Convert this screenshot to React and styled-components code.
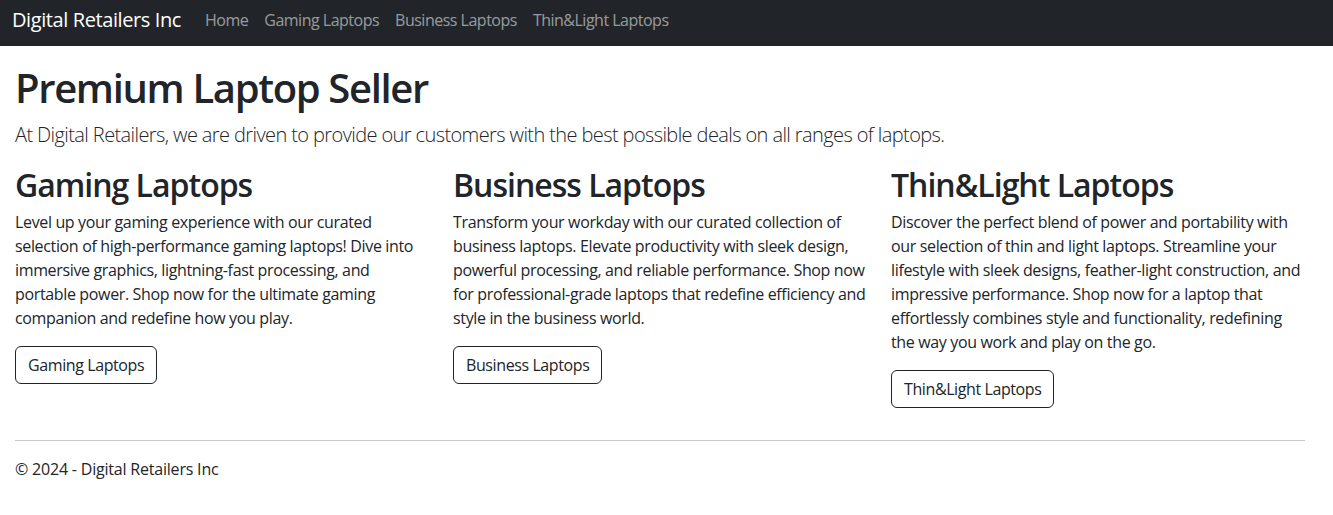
import React from "react";
import styled, { createGlobalStyle } from "styled-components";

const Global = createGlobalStyle`
  * { box-sizing: border-box; }
  body {
    margin: 0;
    font-family: "Open Sans", "Noto Sans", "Liberation Sans", sans-serif;
    font-size: 16px;
    line-height: 1.5;
    color: #212529;
    background: #fff;
  }
`;

const Navbar = styled.nav`
  height: 46px;
  background: #212529;
  display: flex;
  align-items: center;
  padding: 0 12px 6px;
`;

const Brand = styled.a`
  font-size: 20px;
  line-height: 30px;
  color: #fff;
  text-decoration: none;
  margin-right: 16px;
  letter-spacing: -0.4px;
`;

const NavList = styled.ul`
  display: flex;
  list-style: none;
  margin: 0;
  padding: 0;
`;

const NavLink = styled.a`
  display: block;
  padding: 8px;
  color: rgba(255, 255, 255, 0.55);
  text-decoration: none;
  font-size: 16px;
  line-height: 24px;
  letter-spacing: -0.5px;
`;

const Main = styled.main`
  padding: 18px 28px 0 15px;
`;

const Title = styled.h1`
  margin: 0 0 8px;
  font-size: 40px;
  font-weight: 600;
  line-height: 1.2;
  letter-spacing: -1.35px;
`;

const Lead = styled.p`
  margin: 0 0 16px;
  font-size: 20px;
  font-weight: 300;
  line-height: 1.5;
  letter-spacing: -0.6px;
`;

const Row = styled.div`
  display: grid;
  grid-template-columns: repeat(3, 1fr);
  column-gap: 24px;
`;

const Col = styled.section``;

const ColTitle = styled.h2`
  margin: 0 0 6px;
  font-size: 32px;
  font-weight: 600;
  line-height: 1.2;
  letter-spacing: -1px;
`;

const Text = styled.p`
  margin: 0 0 16px;
  letter-spacing: -0.35px;
`;

const Button = styled.a`
  display: inline-block;
  padding: 6px 12px;
  border: 1px solid #212529;
  border-radius: 6px;
  color: #212529;
  text-decoration: none;
  font-size: 16px;
  line-height: 24px;
  letter-spacing: -0.4px;
`;

const Rule = styled.hr`
  margin: 16px 0;
  border: 0;
  border-top: 1px solid #212529;
  opacity: 0.25;
`;

const Footer = styled.footer`
  letter-spacing: -0.2px;
`;

const cards = [
  {
    title: "Gaming Laptops",
    text:
      "Level up your gaming experience with our curated selection of high-performance gaming laptops! Dive into immersive graphics, lightning-fast processing, and portable power. Shop now for the ultimate gaming companion and redefine how you play.",
  },
  {
    title: "Business Laptops",
    text:
      "Transform your workday with our curated collection of business laptops. Elevate productivity with sleek design, powerful processing, and reliable performance. Shop now for professional-grade laptops that redefine efficiency and style in the business world.",
  },
  {
    title: "Thin&Light Laptops",
    text:
      "Discover the perfect blend of power and portability with our selection of thin and light laptops. Streamline your lifestyle with sleek designs, feather-light construction, and impressive performance. Shop now for a laptop that effortlessly combines style and functionality, redefining the way you work and play on the go.",
  },
];

export default function App() {
  return (
    <>
      <Global />
      <Navbar>
        <Brand href="#">Digital Retailers Inc</Brand>
        <NavList>
          {["Home", "Gaming Laptops", "Business Laptops", "Thin&Light Laptops"].map((l) => (
            <li key={l}>
              <NavLink href="#">{l}</NavLink>
            </li>
          ))}
        </NavList>
      </Navbar>
      <Main>
        <Title>Premium Laptop Seller</Title>
        <Lead>
          At Digital Retailers, we are driven to provide our customers with the best possible deals on all ranges of laptops.
        </Lead>
        <Row>
          {cards.map((c) => (
            <Col key={c.title}>
              <ColTitle>{c.title}</ColTitle>
              <Text>{c.text}</Text>
              <Text>
                <Button href="#">{c.title}</Button>
              </Text>
            </Col>
          ))}
        </Row>
        <Rule />
        <Footer>© 2024 - Digital Retailers Inc</Footer>
      </Main>
    </>
  );
}
